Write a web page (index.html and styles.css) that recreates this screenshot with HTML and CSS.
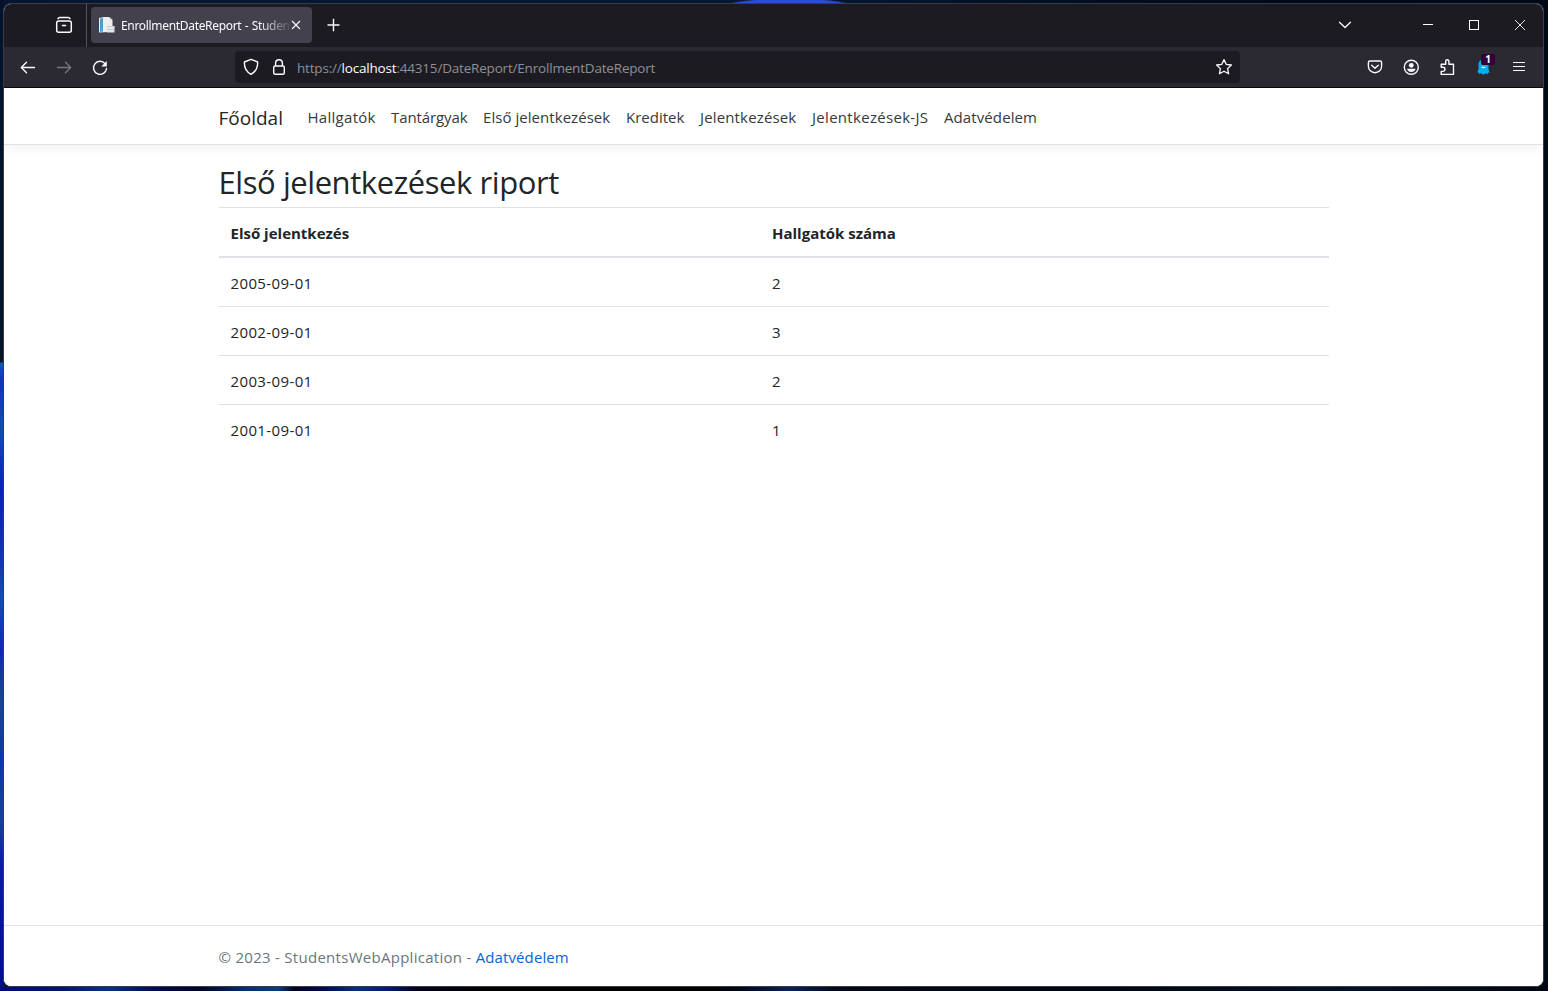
FILE: index.html
```html
<!DOCTYPE html>
<html lang="hu">
<head>
<meta charset="utf-8">
<title>EnrollmentDateReport - StudentsWebApplication</title>
<link rel="stylesheet" href="styles.css">
</head>
<body>
<div class="window">
  <div class="tabbar">
    <div class="view-btn">
      <svg width="18" height="18" viewBox="0 0 18 18" fill="none" stroke="#fbfbfe" stroke-width="1.500" stroke-linecap="round" stroke-linejoin="round"><path d="M3 2.600c.4-.8 1-1.100 1.800-1.100h8.400c.8 0 1.400.3 1.800 1.100"/><rect x="1.700" y="5" width="14.600" height="11.300" rx="2"/><path d="M7.400 9.500h3.200"/></svg>
    </div>
    <div class="tab">
      <svg width="16" height="16" viewBox="0 0 16 16"><path d="M0 1l5-1h5v15l-10 .5z" fill="#e9eef2"/><path d="M1 1.500l3-.5v13.500l-3 .5z" fill="#4c9fd0"/><path d="M5 .5h6l2.500 2.500V15H5z" fill="#eeefeb"/><path d="M11 .5V3h2.500z" fill="#c9cfd2"/><path d="M8 9h7.500v6.500H8z" fill="#e2e7ea"/><path d="M8 9h7.500v1H8zM8 12h7v1H8z" fill="#c3cdd2"/></svg>
      <span class="tab-title">EnrollmentDateReport - Studen</span>
      <svg class="tab-close" width="10" height="10" viewBox="0 0 10 10" stroke="#fbfbfe" stroke-width="1.100"><path d="M1 1l8 8M9 1l-8 8"/></svg>
    </div>
    <svg class="new-tab" width="14" height="14" viewBox="0 0 14 14" stroke="#fbfbfe" stroke-width="1.400"><path d="M6.500 .8v12.400M.5 7h12"/></svg>
    <div class="win-buttons">
      <svg class="all-tabs" width="14" height="14" viewBox="0 0 14 14" fill="none" stroke="#fbfbfe" stroke-width="1.300" stroke-linecap="round"><path d="M1.500 4.300l5.500 5.200 5.500-5.200"/></svg>
      <svg width="12" height="12" viewBox="0 0 12 12" stroke="#fff"><path d="M1 5.500h10"/></svg>
      <svg width="12" height="12" viewBox="0 0 12 12" fill="none" stroke="#fff"><rect x="1.500" y="1.500" width="9" height="9"/></svg>
      <svg width="12" height="12" viewBox="0 0 12 12" stroke="#fff" stroke-width=".9"><path d="M1 1l10 10M11 1L1 11"/></svg>
    </div>
  </div>
  <div class="toolbar">
    <div class="nav-buttons">
      <svg width="16" height="16" viewBox="0 0 16 16" fill="none" stroke="#fbfbfe" stroke-width="1.400" stroke-linecap="round" stroke-linejoin="round"><path d="M14.500 7.500h-13M6.500 2.200L1.300 7.500l5.200 5.300"/></svg>
      <svg width="16" height="16" viewBox="0 0 16 16" fill="none" stroke="#77757f" stroke-width="1.300" stroke-linecap="round" stroke-linejoin="round"><path d="M1.500 7.500h13M9.500 2.200l5.200 5.300-5.200 5.300"/></svg>
      <svg width="16" height="16" viewBox="0 0 16 16" fill="none" stroke="#fbfbfe" stroke-width="1.400" stroke-linecap="round"><path d="M13 3.600A6.500 6.500 0 1 0 14.500 8.500"/><path d="M14.800 1v5.500H9.300z" fill="#fbfbfe" stroke="none"/></svg>
    </div>
    <div class="urlbar">
      <svg class="shield" width="16" height="18" viewBox="0 0 16 18" fill="none" stroke="#fbfbfe" stroke-width="1.400" stroke-linejoin="round"><path d="M8 1.300L14.600 4C14.900 9.500 12.800 13.800 8 16.400 3.200 13.800 1.100 9.500 1.400 4z"/></svg>
      <svg class="lock" width="14" height="18" viewBox="0 0 14 18" fill="none" stroke="#fbfbfe" stroke-width="1.400"><rect x="1.700" y="8" width="10.600" height="8.200" rx="1.500"/><path d="M3.600 8V5.200a3.400 3.400 0 0 1 6.800 0V8"/></svg>
      <span class="url">https://<b>localhost</b>:44315/DateReport/EnrollmentDateReport</span>
      <svg class="star" width="18" height="18" viewBox="0 0 18 18" fill="none" stroke="#fbfbfe" stroke-width="1.300" stroke-linejoin="round"><path d="M9 1.600l2.200 4.700 5.200.7-3.800 3.600 1 5.200L9 13.300l-4.600 2.500 1-5.200L1.600 7l5.200-.7z"/></svg>
    </div>
    <div class="tools">
      <svg width="16" height="16" viewBox="0 0 16 16" fill="none" stroke="#fbfbfe" stroke-width="1.400" stroke-linecap="round" stroke-linejoin="round"><path d="M3 2h10a1.600 1.600 0 0 1 1.600 1.600v3.600a6.600 6.600 0 0 1-13.200 0V3.600A1.600 1.600 0 0 1 3 2z"/><path d="M4.700 6.300L8 9.300l3.300-3"/></svg>
      <svg width="16" height="16" viewBox="0 0 16 16" fill="none"><circle cx="8.300" cy="8.300" r="7" stroke="#fbfbfe" stroke-width="1.400"/><circle cx="8.300" cy="6.300" r="2.400" fill="#fbfbfe"/><path d="M4.100 9.800h8.400c0 2-2 3.200-4.200 3.200S4.100 11.800 4.100 9.800z" fill="#fbfbfe"/></svg>
      <svg width="16" height="18" viewBox="0 0 16 18" fill="none" stroke="#fbfbfe" stroke-width="1.400" stroke-linejoin="round"><path d="M2.200 8.200V6.200h4.500V3.400a1.600 1.600 0 0 1 3.200 0v2.800h4.600v10.200H2.200v-3h1.700a2 2 0 0 0 0-4.200H2.200z"/></svg>
      <div class="ghost">
        <svg width="14" height="16" viewBox="0 0 14 16"><path d="M6.500 .5c3.200 0 5 2.200 5 5v4.500l1.200 3.700-1.700-.3-.3 1.900-1.700-1L6.500 15.700 4 14.300l-1.700 1-.3-1.900-1.700.3L1.500 10V5.500c0-2.800 1.800-5 5-5z" fill="#00aef0"/><path d="M4.800 7.500c.8 1.600 2.700 1.600 3.500 0" stroke="#fff" stroke-width="1.200" fill="none"/></svg>
        <span class="badge">1</span>
      </div>
      <svg width="16" height="16" viewBox="0 0 16 16" stroke="#fbfbfe" stroke-width="1.200" stroke-linecap="round"><path d="M2.500 3.500h11M2.500 7.500h11M2.500 11.500h11"/></svg>
    </div>
  </div>
  <div class="page">
    <header class="site-header">
      <nav class="container navbar">
        <a class="brand">Főoldal</a>
        <a class="w1">Hallgatók</a><a class="w2">Tantárgyak</a><a class="w3">Első jelentkezések</a><a class="w4">Kreditek</a><a class="w5">Jelentkezések</a><a class="w6">Jelentkezések-JS</a><a class="w7">Adatvédelem</a>
      </nav>
    </header>
    <main class="container main">
      <h1>Első jelentkezések riport</h1>
      <table>
        <thead><tr><th>Első jelentkezés</th><th>Hallgatók száma</th></tr></thead>
        <tbody>
          <tr><td>2005-09-01</td><td>2</td></tr>
          <tr><td>2002-09-01</td><td>3</td></tr>
          <tr><td>2003-09-01</td><td>2</td></tr>
          <tr><td>2001-09-01</td><td>1</td></tr>
        </tbody>
      </table>
    </main>
    <footer class="site-footer">
      <div class="container"><span class="copy">© 2023 - StudentsWebApplication - </span><a>Adatvédelem</a></div>
    </footer>
  </div>
</div>
</body>
</html>
```
FILE: styles.css
```css
* { box-sizing: border-box; }
body {
  margin: 0; width: 1548px; height: 991px; overflow: hidden; padding: 3px 4px 4px 3px;
  font-family: "Open Sans", "Noto Sans", sans-serif;
  background:
    linear-gradient(90deg, #000a78, #06136c 4%, #0a2f86 7%, #030a50 10%, #010322 13%, #082f74 16%, #0b3c7c 18%, #01021c 19%, #020a50 21%, #0a2d7c 23%, #061878 25%, #010118 27%, #000 31%, #000 46%, #020818 48%, #0a2058 51%, #020818 54%, #000410 70%, #031024 87%, #010510) 0 987px / 100% 4px no-repeat,
    linear-gradient(#04122b, #06142a 362px, #0a5cb8 363px, #0d38ae 380px, #0a50b0 430px, #0822b0 490px, #1038a8 560px, #0c50b4 600px, #1028a8 650px, #12489c 700px, #0b38a8 760px, #1440a4 820px, #0a1c9c 870px, #000e88) 0 0 / 3px 100% no-repeat,
    radial-gradient(ellipse 72px 11px at 789px 9px, #2850cc 90%, transparent) no-repeat,
    linear-gradient(90deg, #061630, #041832 50%, #010b1c 75%, #010816);
}
.window {
  display: flex; flex-direction: column; width: 1541px; height: 984px;
  border: 1px solid #383b49; border-radius: 8px; overflow: hidden; background: #fff;
}
.window svg { display: block; flex: none; }

.tabbar { display: flex; align-items: center; height: 43px; padding-bottom: 1px; background: #1c1b22; flex: none; }
.view-btn { width: 83px; height: 43px; margin-bottom: -1px; padding: 12px 0 0 51px; border-right: 1px solid #55545c; }
.tab {
  display: flex; align-items: center; width: 221px; height: 36px; margin-left: 4px; padding: 0 11px 0 8px;
  background: #42414d; border-radius: 4px; color: #fbfbfe; font-size: 12px;
}
.tab-title {
  width: 168px; margin-left: 6px; margin-right: 2px; white-space: nowrap; line-height: 20px; padding-top: 1px;
  font-family: "Noto Sans", sans-serif; letter-spacing: -.32px; word-spacing: .6px; flex: none;
  mask-image: linear-gradient(90deg, #000 138px, transparent 172px);
}
.new-tab { margin-left: 15px; }
.win-buttons { display: flex; align-items: center; gap: 34px; margin-left: auto; padding-right: 17px; }
.all-tabs { margin-right: 36px; }

.toolbar { display: flex; align-items: center; height: 41px; background: #2b2a33; border-bottom: 1px solid #0c0c0d; flex: none; }
.nav-buttons { display: flex; gap: 20px; width: 231px; padding: 1px 0 0 16px; }
.urlbar { display: flex; align-items: center; width: 1005px; height: 32px; padding: 0 7px 0 8px; border-radius: 4px; background: #1c1b22; }
.lock { margin-left: 13px; }
.url { margin-left: 11px; color: #8f8f98; font-size: 13.500px; letter-spacing: -.19px; white-space: nowrap; line-height: 20px; padding-top: 2px; }
.url b { color: #fbfbfe; font-weight: 400; }
.star { margin-left: auto; }
.tools { display: flex; align-items: center; gap: 20px; margin-left: 127px; }
.ghost { position: relative; width: 16px; padding-left: 2px; }
.badge {
  position: absolute; left: 6px; top: -5px; width: 14px; height: 11px; border-radius: 2px; background: #330033;
  color: #fff; font: 700 10px/11px "Open Sans", sans-serif; text-align: center;
}

.page { display: flex; flex-direction: column; flex: 1; background: #fff; color: #212529; font-size: 16px; line-height: 24px; }
.container { width: 1110px; margin: 0 auto; }
.site-header { height: 57px; border-bottom: 1px solid #dee2e6; box-shadow: 0 4px 12px rgba(0,0,0,.05); }
.navbar { display: flex; height: 56px; padding-top: 17px; color: #343a40; font-size: 15px; white-space: nowrap; }
.navbar a { flex: none; }
.navbar .brand { width: 89px; padding-top: 1px; font-size: 19px; color: #212529; }
.w1 { width: 83.500px; letter-spacing: .28px; }
.w2 { width: 92px; letter-spacing: -.1px; }
.w3 { width: 143px; letter-spacing: .05px; }
.w4 { width: 74px; }
.w5 { width: 112px; letter-spacing: .15px; }
.w6 { width: 132px; letter-spacing: .3px; }
.w7 { letter-spacing: .1px; }
.main { flex: 1; padding-top: 16px; }
h1 { margin: 0 0 6px; padding-top: 2px; font-size: 31px; font-weight: 400; line-height: 38px; letter-spacing: -.43px; white-space: nowrap; }
table { width: 100%; border-collapse: collapse; table-layout: fixed; }
th, td { height: 49px; padding: 13px 12px 11px; text-align: left; border-top: 1px solid #dee2e6; font-size: 15px; line-height: 24px; }
td { letter-spacing: .38px; }
th { border-bottom: 2px solid #dee2e6; font-weight: 700; }
th:first-child { width: 541.500px; }
.site-footer { height: 61px; padding-top: 19px; border-top: 1px solid #dee2e6; color: #6c757d; font-size: 15px; white-space: nowrap; }
.copy { letter-spacing: .28px; }
.site-footer a { color: #0366d6; letter-spacing: .1px; }
```
